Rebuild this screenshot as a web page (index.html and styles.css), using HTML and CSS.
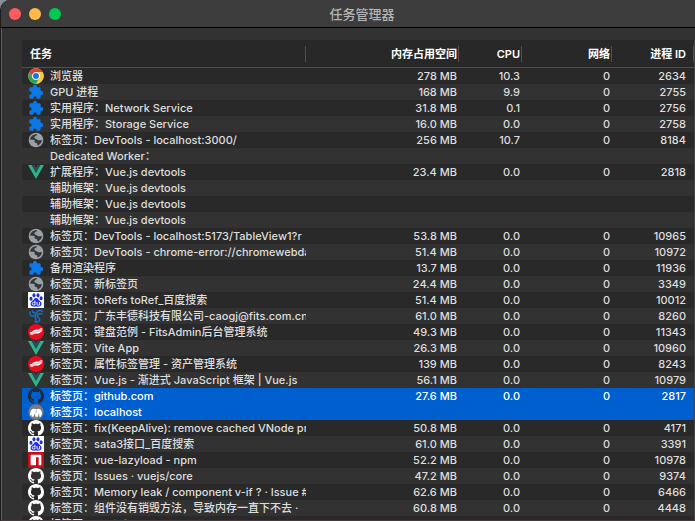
FILE: index.html
```html
<!DOCTYPE html>
<html lang="zh-CN">
<head>
<meta charset="utf-8">
<title>任务管理器</title>
<link rel="stylesheet" href="styles.css">
</head>
<body>
<svg class="sprite" aria-hidden="true">
  <symbol id="chrome" viewBox="0 0 48 48">
    <circle cx="24" cy="24" r="23" fill="#fff"/>
    <path d="M4.1 12.5A23 23 0 0 1 43.9 12.5H24A11.500 11.500 0 0 0 14 18.300V29.750Z" fill="#e33b2e"/>
    <path d="M43.900 12.500A23 23 0 0 1 24 47L34 29.750A11.500 11.500 0 0 0 24 12.500Z" fill="#fcc934"/>
    <path d="M24 47A23 23 0 0 1 4.100 12.500L14 29.750A11.500 11.500 0 0 0 34 29.750Z" fill="#2da14e"/>
    <circle cx="24" cy="24" r="11.500" fill="#fff"/>
    <circle cx="24" cy="24" r="9" fill="#1a73e8"/>
  </symbol>
  <symbol id="puzzle" viewBox="0 0 24 24">
    <path fill="#0a78e6" d="M20 10.500h-1V7c0-1.100-.9-2-2-2h-3.500V4a3 3 0 0 0-6 0v1H4c-1.100 0-2 .9-2 2v4h1a2.300 2.300 0 0 1 0 5H2v4c0 1.100.9 2 2 2h4v-1a2.300 2.300 0 0 1 5 0v1h4c1.100 0 2-.9 2-2v-3.500h1a3 3 0 0 0 0-6z"/>
  </symbol>
  <symbol id="globe" viewBox="0 0 24 24">
    <circle cx="12" cy="12" r="11" fill="#9aa0a6"/>
    <path d="M14 3.500c-1 2.500-3.500 2-4.500 4-.5 1.800 1.500 2.500 3 3 1.500.6 2 2 4 2 1.800 0 3-1 4.200-.5-.2 4-2.800 7.400-6.500 8.400-.5-1.600.4-2.700-.8-3.700-1.200-.8-3 0-3.600-1.700-.5-1.200.8-2 .2-2.800C8.800 11 6 12 3.300 11.500 3.500 7 7.500 3 14 3.500z" fill="#34373a"/>
    <path d="M15 5.500c2 .7 3.500 2 4.300 4-2 .8-4.800.3-5.300-1.200-.3-1 1-1.600 1-2.800zM4.300 14c2.200.2 4.200 1 5 3 .3 1 .2 1.800.8 2.700C7.400 19 5 17 4.300 14z" fill="#9aa0a6"/>
  </symbol>
  <symbol id="vue" viewBox="0 0 24 24">
    <path d="M0 1.500h5.500L12 13 18.500 1.500H24L12 22.500z" fill="#2bb585"/>
    <path d="M5.500 1.500h4L12 6l2.500-4.500h4L12 13z" fill="#34495e"/>
  </symbol>
  <symbol id="baidu" viewBox="0 0 24 24">
    <path d="M0 0h24v24H0z" fill="#fff"/>
    <g fill="#1f30dc"><ellipse cx="4.500" cy="10" rx="2.300" ry="3"/><ellipse cx="9" cy="5" rx="2.300" ry="3.200"/><ellipse cx="15" cy="5" rx="2.300" ry="3.200"/><ellipse cx="19.700" cy="9.500" rx="2.300" ry="3"/><path d="M12 9c3 0 3.500 2.700 5.500 4.300 2.500 2 3.300 3.700 2.600 6-1 3.200-4.600 2.600-8.100 2.600s-6.900.6-8-2.600c-.8-2.300.4-4 2.700-6C8.700 11.500 9.200 9 12 9z"/></g>
    <path d="M10.500 13v6.500H8.300a1.800 1.800 0 0 1 0-4h2.200M13.500 15v3.500c0 1 .7 1.200 1.500 1.200h2.200V15" fill="none" stroke="#fff" stroke-width="1.300"/>
  </symbol>
  <symbol id="telecom" viewBox="0 0 24 24">
    <g fill="none" stroke="#1a6ebc" stroke-linecap="round" stroke-width="2.400"><path d="M3 6c-1 5 3 7.500 7 5 3-2 3-7 7-7.500 2-.2 3.500.5 4.500 1.500"/><path d="M7 4c-1 2.500 1 4 3 2.500M21 9c-3-1.500-7-.5-7 2.500s4 3.500 3.500 6.500-4.500 4-7 2.500"/><path d="M11 12c-1 3 1.500 4 1 7"/></g>
  </symbol>
  <symbol id="fits" viewBox="0 0 24 24">
    <circle cx="12" cy="12" r="12" fill="#e70d20"/>
    <path d="M3 12.500c3 .3 4-3 7-3.500 2.500-.4 4 .3 6-1L21.500 5.500 21 8l1 .5-1.500 1.200.5 1.300-4 2.500c-3 1.600-5 0-7.500 1-2 .9-3.800 2.300-6.500 1.500l2-1.300-2.500-.4z" fill="#fff"/>
    <path d="M5.500 14.500c3-2 4.500-3 7-2.900 3 .1 5-1.900 7.500-2.900" fill="none" stroke="#e70d20" stroke-width=".7"/>
  </symbol>
  <symbol id="octocat" viewBox="0 0 16 16">
    <path fill="currentColor" d="M8 0C3.580 0 0 3.580 0 8c0 3.540 2.290 6.530 5.470 7.590.4.070.55-.17.55-.38 0-.19-.01-.82-.01-1.490-2.010.37-2.530-.49-2.690-.94-.09-.23-.48-.94-.82-1.130-.28-.15-.68-.52-.01-.53.63-.01 1.080.58 1.230.82.72 1.210 1.870.87 2.330.66.07-.52.28-.87.51-1.070-1.780-.2-3.640-.89-3.640-3.950 0-.87.31-1.590.82-2.150-.08-.2-.36-1.020.08-2.120 0 0 .67-.21 2.200.82.64-.18 1.320-.27 2-.27s1.360.09 2 .27c1.530-1.040 2.200-.82 2.200-.82.44 1.100.16 1.920.08 2.120.51.56.82 1.270.82 2.150 0 3.070-1.870 3.750-3.650 3.950.29.25.54.73.54 1.480 0 1.070-.01 1.930-.01 2.200 0 .21.15.46.55.38A8.010 8.010 0 0 0 16 8c0-4.420-3.580-8-8-8z"/>
  </symbol>
  <symbol id="mamp" viewBox="0 0 24 24">
    <circle cx="12" cy="12" r="11.500" fill="#777c82"/>
    <path d="M3 16c0-5 2-9 6-9 1.500 0 2.500.5 3.500 1 3-2 7-.5 8 3 .6 2.500.5 5-1 8h-2.500l-.5-6-1.500 6H11l-.5-5L8 19H5.500l.5-4-1.500 3z" fill="#fff"/>
    <path d="M12 8.500c1 2 .5 4-1 5" fill="none" stroke="#777c82"/>
  </symbol>
  <symbol id="npm" viewBox="0 0 24 24">
    <path d="M0 0h24v24H0z" fill="#cb0b18"/>
    <path d="M4 4h16v16h-4V8h-4v12H4z" fill="#fff"/>
  </symbol>
</svg>
<div class="window">
  <header class="titlebar">
    <div class="lights">
      <button class="light close" aria-label="关闭"></button>
      <button class="light minimize" aria-label="最小化"></button>
      <button class="light expand" aria-label="缩放"></button>
    </div>
    <h1>任务管理器</h1>
  </header>
  <main class="content">
    <table class="tasks">
      <colgroup><col><col class="col-memory"><col class="col-cpu"><col class="col-network"><col class="col-pid"></colgroup>
      <thead>
        <tr><th>任务</th><th>内存占用空间</th><th>CPU</th><th>网络</th><th>进程 ID</th></tr>
      </thead>
      <tbody>
        <tr><td><div class="task"><svg class="icon"><use href="#chrome"/></svg><span>浏览器</span></div></td><td>278 MB</td><td>10.3</td><td>0</td><td>2634</td></tr>
        <tr><td><div class="task"><svg class="icon"><use href="#puzzle"/></svg><span>GPU 进程</span></div></td><td>168 MB</td><td>9.9</td><td>0</td><td>2755</td></tr>
        <tr><td><div class="task"><svg class="icon"><use href="#puzzle"/></svg><span>实用程序：Network Service</span></div></td><td>31.8 MB</td><td>0.1</td><td>0</td><td>2756</td></tr>
        <tr><td><div class="task"><svg class="icon"><use href="#puzzle"/></svg><span>实用程序：Storage Service</span></div></td><td>16.0 MB</td><td>0.0</td><td>0</td><td>2758</td></tr>
        <tr><td><div class="task"><svg class="icon"><use href="#globe"/></svg><span>标签页：DevTools - localhost:3000/</span></div></td><td>256 MB</td><td>10.7</td><td>0</td><td>8184</td></tr>
        <tr><td><div class="task"><svg class="icon"></svg><span>Dedicated Worker：</span></div></td><td></td><td></td><td></td><td></td></tr>
        <tr><td><div class="task"><svg class="icon"><use href="#vue"/></svg><span>扩展程序：Vue.js devtools</span></div></td><td>23.4 MB</td><td>0.0</td><td>0</td><td>2818</td></tr>
        <tr><td><div class="task"><svg class="icon"></svg><span>辅助框架：Vue.js devtools</span></div></td><td></td><td></td><td></td><td></td></tr>
        <tr><td><div class="task"><svg class="icon"></svg><span>辅助框架：Vue.js devtools</span></div></td><td></td><td></td><td></td><td></td></tr>
        <tr><td><div class="task"><svg class="icon"></svg><span>辅助框架：Vue.js devtools</span></div></td><td></td><td></td><td></td><td></td></tr>
        <tr><td><div class="task"><svg class="icon"><use href="#globe"/></svg><span>标签页：DevTools - localhost:5173/TableView1?r</span></div></td><td>53.8 MB</td><td>0.0</td><td>0</td><td>10965</td></tr>
        <tr><td><div class="task"><svg class="icon"><use href="#globe"/></svg><span>标签页：DevTools - chrome-error://chromewebda</span></div></td><td>51.4 MB</td><td>0.0</td><td>0</td><td>10972</td></tr>
        <tr><td><div class="task"><svg class="icon"><use href="#puzzle"/></svg><span>备用渲染程序</span></div></td><td>13.7 MB</td><td>0.0</td><td>0</td><td>11936</td></tr>
        <tr><td><div class="task"><svg class="icon"><use href="#globe"/></svg><span>标签页：新标签页</span></div></td><td>24.4 MB</td><td>0.0</td><td>0</td><td>3349</td></tr>
        <tr><td><div class="task"><svg class="icon"><use href="#baidu"/></svg><span>标签页：toRefs toRef_百度搜索</span></div></td><td>51.4 MB</td><td>0.0</td><td>0</td><td>10012</td></tr>
        <tr><td><div class="task"><svg class="icon"><use href="#telecom"/></svg><span>标签页：广东丰德科技有限公司-caogj@fits.com.cn</span></div></td><td>61.0 MB</td><td>0.0</td><td>0</td><td>8260</td></tr>
        <tr><td><div class="task"><svg class="icon"><use href="#fits"/></svg><span>标签页：键盘范例 - FitsAdmin后台管理系统</span></div></td><td>49.3 MB</td><td>0.0</td><td>0</td><td>11343</td></tr>
        <tr><td><div class="task"><svg class="icon"><use href="#vue"/></svg><span>标签页：Vite App</span></div></td><td>26.3 MB</td><td>0.0</td><td>0</td><td>10960</td></tr>
        <tr><td><div class="task"><svg class="icon"><use href="#fits"/></svg><span>标签页：属性标签管理 - 资产管理系统</span></div></td><td>139 MB</td><td>0.0</td><td>0</td><td>8243</td></tr>
        <tr><td><div class="task"><svg class="icon"><use href="#vue"/></svg><span>标签页：Vue.js - 渐进式 JavaScript 框架 | Vue.js</span></div></td><td>56.1 MB</td><td>0.0</td><td>0</td><td>10979</td></tr>
        <tr class="selected"><td><div class="task"><svg class="icon dark"><use href="#octocat"/></svg><span>标签页：github.com</span></div></td><td>27.6 MB</td><td>0.0</td><td>0</td><td>2817</td></tr>
        <tr class="selected"><td><div class="task"><svg class="icon"><use href="#mamp"/></svg><span>标签页：localhost</span></div></td><td></td><td></td><td></td><td></td></tr>
        <tr><td><div class="task"><svg class="icon"><use href="#octocat"/></svg><span>标签页：fix(KeepAlive): remove cached VNode pr</span></div></td><td>50.8 MB</td><td>0.0</td><td>0</td><td>4171</td></tr>
        <tr><td><div class="task"><svg class="icon"><use href="#baidu"/></svg><span>标签页：sata3接口_百度搜索</span></div></td><td>61.0 MB</td><td>0.0</td><td>0</td><td>3391</td></tr>
        <tr><td><div class="task"><svg class="icon"><use href="#npm"/></svg><span>标签页：vue-lazyload - npm</span></div></td><td>52.2 MB</td><td>0.0</td><td>0</td><td>10978</td></tr>
        <tr><td><div class="task"><svg class="icon"><use href="#octocat"/></svg><span>标签页：Issues · vuejs/core</span></div></td><td>47.2 MB</td><td>0.0</td><td>0</td><td>9374</td></tr>
        <tr><td><div class="task"><svg class="icon"><use href="#octocat"/></svg><span>标签页：Memory leak / component v-if ? · Issue #</span></div></td><td>62.6 MB</td><td>0.0</td><td>0</td><td>6466</td></tr>
        <tr><td><div class="task"><svg class="icon"><use href="#octocat"/></svg><span>标签页：组件没有销毁方法，导致内存一直下不去 ·</span></div></td><td>60.8 MB</td><td>0.0</td><td>0</td><td>4448</td></tr>
        <tr><td><div class="task"><svg class="icon"><use href="#octocat"/></svg><span>标签页：vuejs/core</span></div></td><td>51.2 MB</td><td>0.0</td><td>0</td><td>4480</td></tr>
      </tbody>
    </table>
  </main>
</div>
</body>
</html>
```
FILE: styles.css
```css
* {
  box-sizing: border-box;
}

body {
  margin: 0;
  height: 100vh;
  overflow: hidden;
  background: #8c9198;
  color: #dedede;
  font: 500 11px/16px Inter, "Noto Sans CJK SC", sans-serif;
}

.sprite {
  display: none;
}

.window {
  display: flex;
  flex-direction: column;
  height: 100vh;
  border-left: 1px solid #1c1c1c;
  border-bottom: 1px solid #443a3d;
  border-top-left-radius: 10px;
  box-shadow: inset 1px 0 #5e5e5e;
  background: #323232;
  overflow: hidden;
}

.titlebar {
  display: grid;
  grid-template-columns: 1fr auto 1fr;
  align-items: center;
  flex: none;
  height: 28px;
  padding-left: 36px;
  padding-right: 8px;
  border-bottom: 1px solid #000;
  background: #3d3d3d;
}

.titlebar h1 {
  margin: 0;
  color: #b4b4b4;
  font-size: 13px;
  font-weight: 500;
  line-height: 26px;
}

.lights {
  display: flex;
  gap: 8px;
  margin-left: -28px;
}

.light {
  width: 12px;
  height: 12px;
  padding: 0;
  border: 0;
  border-radius: 50%;
}

.close {
  background: #ff5a5f;
}

.minimize {
  background: #ffb94a;
}

.expand {
  background: #00c853;
}

.content {
  flex: 1;
  min-height: 0;
  margin: 12px 0 0 21px;
  border-right: 1px solid #444;
  overflow: hidden;
}

.tasks {
  width: 100%;
  table-layout: fixed;
  border-collapse: separate;
  border-spacing: 0;
}

.col-memory {
  width: 153px;
}

.col-cpu {
  width: 63px;
}

.col-network {
  width: 90px;
}

.col-pid {
  width: 82px;
}

th {
  height: 28px;
  padding: 0 2px 0 8px;
  border-bottom: 1px solid #505050;
  background: linear-gradient(#505050, #505050) right center / 1px 16px no-repeat #282828;
  color: #fff;
  font-weight: 600;
  text-align: right;
}

th:first-child {
  text-align: left;
}

td {
  height: 16px;
  padding: 0 2px 0 0;
  background: #292929;
  text-align: right;
  white-space: nowrap;
}

th:last-child,
td:last-child {
  padding-right: 8px;
}

td:first-child {
  padding: 0;
  text-align: left;
}

tr:nth-child(even) td {
  background: #323232;
}

tbody tr.selected td {
  background: #005fce;
  color: #fff;
}

.task {
  display: flex;
  gap: 6px;
  height: 16px;
  padding-left: 6px;
  overflow: hidden;
}

.task span {
  flex: 1;
  min-width: 0;
  overflow: hidden;
}

.icon {
  flex: none;
  width: 16px;
  height: 16px;
  color: #fff;
}

.icon.dark {
  color: #1f2937;
}
```
